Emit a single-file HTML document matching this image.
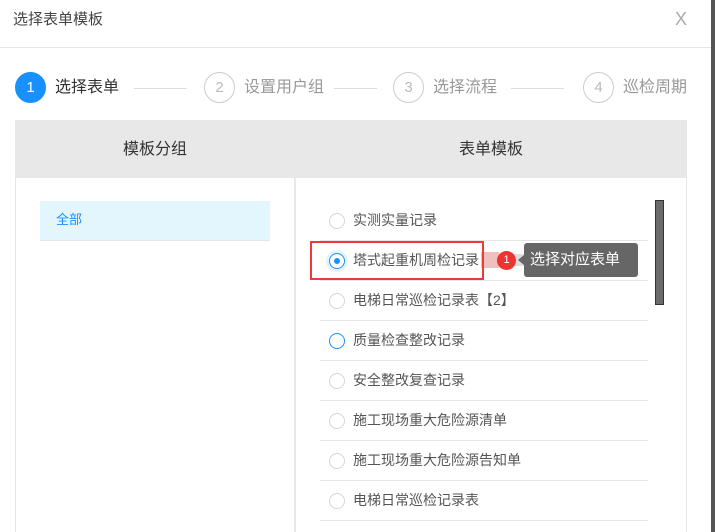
<!DOCTYPE html>
<html><head><meta charset="utf-8"><style>
*{margin:0;padding:0;box-sizing:border-box}
body{width:715px;height:532px;overflow:hidden;background:#fff;position:relative;font-family:"Liberation Sans","Noto Sans CJK SC",sans-serif;color:#333}
.a{position:absolute}
.t{font-size:14px;white-space:nowrap;line-height:20px}
.sc{position:absolute;width:31px;height:31px;border-radius:50%;border:1px solid #ccc;color:#bbb;font-size:15px;text-align:center;line-height:29px}
.ln{position:absolute;height:1px;background:#ddd;top:88px}
.row{position:absolute;left:320px;width:328px;height:1px;background:#e5e5e5}
.rd{position:absolute;left:329px;width:16px;height:16px;border-radius:50%;border:1px solid #d5d5d5;background:#fff}
.rt{position:absolute;left:353px;font-size:14px;color:#555;white-space:nowrap;line-height:18px}
</style></head><body>
<div class="a t" style="left:13px;top:10px;font-size:15px;color:#444">选择表单模板</div>
<div class="a" style="left:675px;top:9px;font-size:18px;color:#aaa;font-weight:300">X</div>
<div class="a" style="left:0;top:47px;width:711px;height:1px;background:#e5e5e5"></div>
<div class="a" style="left:711px;top:0;width:4px;height:532px;background:#555"></div>

<div class="sc" style="left:15px;top:72px;background:#1890ff;border-color:#1890ff;color:#fff">1</div>
<div class="a t" style="left:55px;top:78px;font-size:16px;color:#333">选择表单</div>
<div class="ln" style="left:134px;width:53px"></div>
<div class="sc" style="left:204px;top:72px">2</div>
<div class="a t" style="left:244px;top:78px;font-size:16px;color:#999">设置用户组</div>
<div class="ln" style="left:334px;width:43px"></div>
<div class="sc" style="left:393px;top:72px">3</div>
<div class="a t" style="left:433px;top:78px;font-size:16px;color:#999">选择流程</div>
<div class="ln" style="left:511px;width:53px"></div>
<div class="sc" style="left:583px;top:72px">4</div>
<div class="a t" style="left:623px;top:78px;font-size:16px;color:#999">巡检周期</div>

<div class="a" style="left:15px;top:120px;width:672px;height:58px;background:#e8e8e8"></div>
<div class="a t" style="left:123px;top:140px;font-size:16px">模板分组</div>
<div class="a t" style="left:459px;top:140px;font-size:16px">表单模板</div>
<div class="a" style="left:15px;top:178px;width:1px;height:354px;background:#e3e3e3"></div>
<div class="a" style="left:294px;top:120px;width:2px;height:412px;background:#e8e8e8"></div>
<div class="a" style="left:686px;top:120px;width:1px;height:412px;background:#e8e8e8"></div>

<div class="a" style="left:40px;top:201px;width:230px;height:40px;background:#e3f5fd;border-bottom:1px solid #e5e5e5"></div>
<div class="a t" style="left:56px;top:210px;font-size:13px;color:#1890ff">全部</div>

<div class="a" style="left:655px;top:200px;width:9px;height:105px;background:#6b6b6b;border:1px solid #333"></div>

<div class="row" style="top:240px"></div><div class="row" style="top:280px"></div><div class="row" style="top:320px"></div><div class="row" style="top:360px"></div><div class="row" style="top:400px"></div><div class="row" style="top:440px"></div><div class="row" style="top:480px"></div><div class="row" style="top:520px"></div>

<div class="rd" style="top:213px"></div><div class="rt" style="top:211px">实测实量记录</div>
<div class="rd" style="top:253px;border-color:#1890ff;box-shadow:0 0 0 3px #e6f2ff"><div style="position:absolute;left:4px;top:4px;width:6px;height:6px;border-radius:50%;background:#1890ff"></div></div><div class="rt" style="top:251px">塔式起重机周检记录</div>
<div class="rd" style="top:293px"></div><div class="rt" style="top:291px">电梯日常巡检记录表【2】</div>
<div class="rd" style="top:333px;border-color:#1890ff"></div><div class="rt" style="top:331px">质量检查整改记录</div>
<div class="rd" style="top:373px"></div><div class="rt" style="top:371px">安全整改复查记录</div>
<div class="rd" style="top:413px"></div><div class="rt" style="top:411px">施工现场重大危险源清单</div>
<div class="rd" style="top:453px"></div><div class="rt" style="top:451px">施工现场重大危险源告知单</div>
<div class="rd" style="top:493px"></div><div class="rt" style="top:491px">电梯日常巡检记录表</div>

<div class="a" style="left:482px;top:254px;width:55px;height:12px;background:#ddd"></div>
<div class="a" style="left:481px;top:252px;width:18px;height:16px;background:#f0c0c0"></div>
<div class="a" style="left:310px;top:241px;width:174px;height:39px;border:2px solid #f03a3a"></div>
<div class="a" style="left:497px;top:251px;width:19px;height:19px;border-radius:50%;background:#ee3333;color:#fff;font-size:11px;text-align:center;line-height:19px">1</div>
<div class="a" style="left:518px;top:255px;width:0;height:0;border-top:5px solid transparent;border-bottom:5px solid transparent;border-right:6px solid #666"></div>
<div class="a" style="left:524px;top:243px;width:114px;height:34px;background:#666;border-radius:3px;color:#fff;font-size:15px;line-height:34px;padding-left:6px;white-space:nowrap">选择对应表单</div>
</body></html>
